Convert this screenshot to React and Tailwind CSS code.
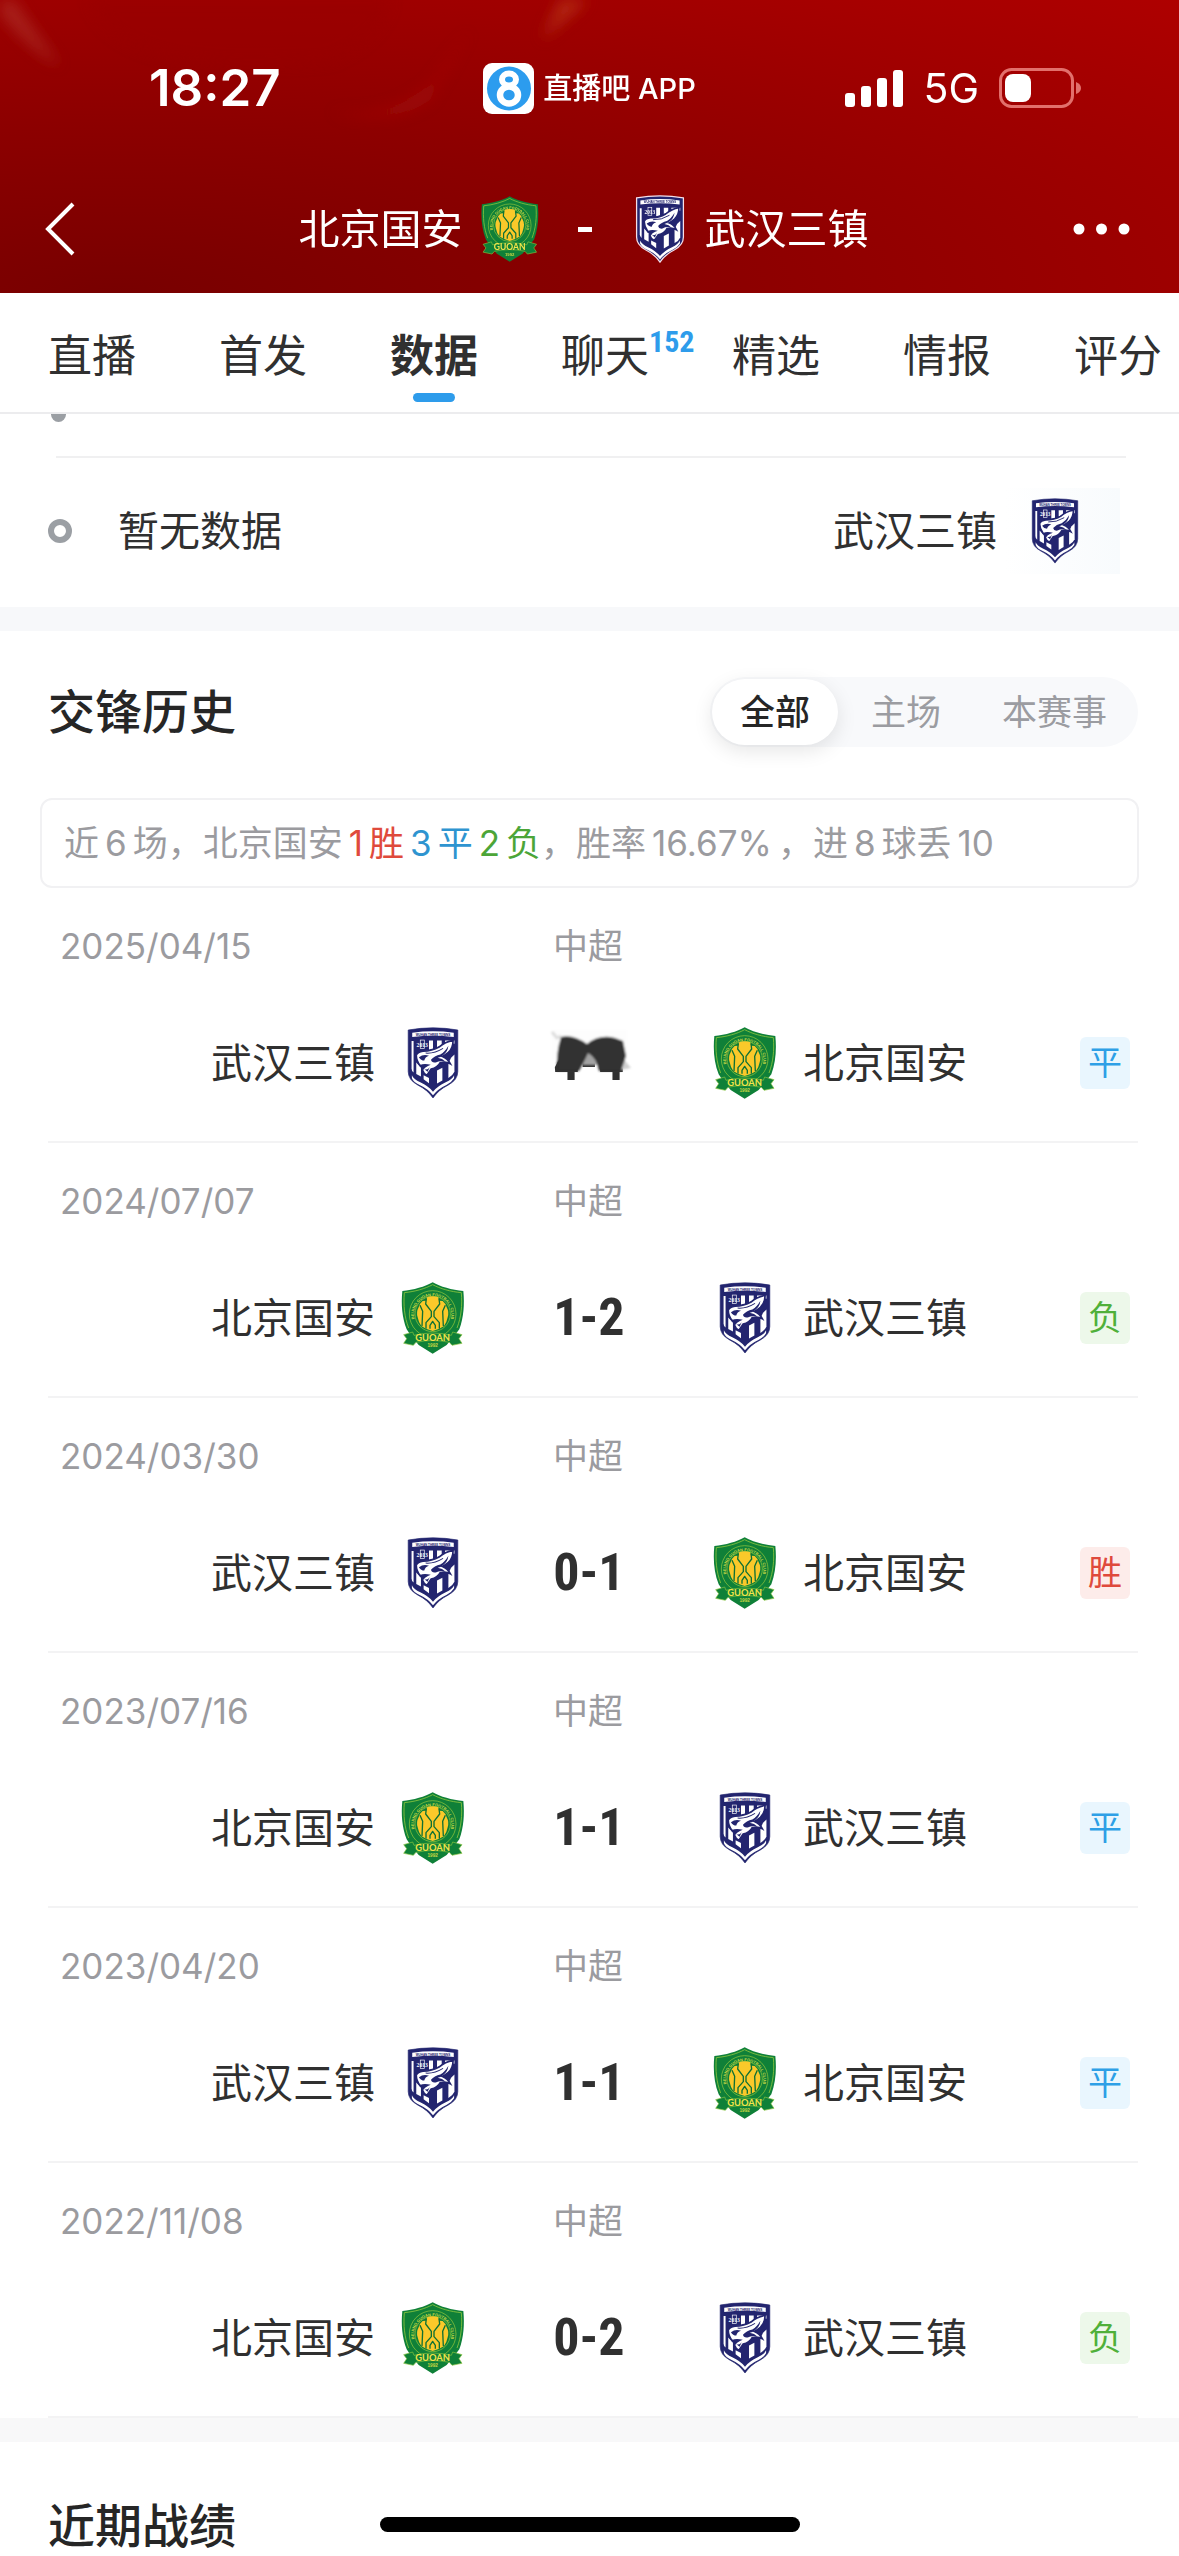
import { useId } from "react";

const GUOAN = "北京国安";
const WUHAN = "武汉三镇";

const tabs = [
  { label: "直播" },
  { label: "首发" },
  { label: "数据", active: true },
  { label: "聊天", count: "152" },
  { label: "精选" },
  { label: "情报" },
  { label: "评分" },
];

const matches = [
  { date: "2025/04/15", home: WUHAN, away: GUOAN, score: "4-4", result: "平", smudged: true },
  { date: "2024/07/07", home: GUOAN, away: WUHAN, score: "1-2", result: "负" },
  { date: "2024/03/30", home: WUHAN, away: GUOAN, score: "0-1", result: "胜" },
  { date: "2023/07/16", home: GUOAN, away: WUHAN, score: "1-1", result: "平" },
  { date: "2023/04/20", home: WUHAN, away: GUOAN, score: "1-1", result: "平" },
  { date: "2022/11/08", home: GUOAN, away: WUHAN, score: "0-2", result: "负" },
];

const resultStyle = {
  平: "bg-[#e9f6fe] text-[#2e9fe6]",
  负: "bg-[#edf8ea] text-[#4fb03a]",
  胜: "bg-[#fdecea] text-[#df4a3c]",
};

function GuoanCrest({ className }) {
  const ring = useId();
  return (
    <svg viewBox="28 18 190 216" className={className} aria-hidden="true">
      <path
        d="M122 19 C100 32 64 42 31 45 C27 85 30 125 44 160 L56 178 L80 207 L122 233 L164 207 L188 178 L202 160 C215 125 218 85 214 45 C180 42 144 32 122 19Z"
        fill="#0f8038"
      />
      <path
        d="M122 26 C100 38 68 47 37 50 C34 88 37 122 50 156 M122 26 C144 38 176 47 208 50 C211 88 208 122 195 156"
        fill="none"
        stroke="#8cc63f"
        strokeWidth="2.5"
      />
      <path id={ring} d="M76 148 A56 56 0 1 1 168 148" fill="none" />
      <circle cx="122" cy="114" r="70" fill="none" stroke="#9ccb3c" strokeWidth="2" />
      <text fontSize="12" fontWeight="700" fill="#c9d944" fontFamily="Liberation Sans, sans-serif">
        <textPath href={`#${ring}`} startOffset="50%" textAnchor="middle">
          BEIJING GUOAN FOOTBALL CLUB
        </textPath>
      </text>
      <circle cx="122" cy="114" r="53" fill="#0f8038" stroke="#9ccb3c" strokeWidth="2" />
      <path
        d="M106 63 Q122 58 138 63 L142 74 L152 75 Q161 82 164 94 Q172 108 167 124 Q164 140 156 150 L142 158 L122 165 L102 158 L88 150 Q80 140 77 124 Q72 108 80 94 Q83 82 92 75 L102 74Z"
        fill="#fbc92a"
      />
      <g fill="none" stroke="#0f7034" strokeWidth="4" strokeLinejoin="round">
        <path d="M103 68 L101 84 L118 106 L118 122 L102 140 V158" />
        <path d="M141 68 L143 84 L126 106 L126 122 L142 140 V158" />
        <path d="M84 88 L92 106 L90 150" />
        <path d="M160 88 L152 106 L154 150" />
        <path d="M114 158 V148 L122 136 L130 148 V158" />
      </g>
      <path
        d="M35 176 L62 168 L66 178 Q122 164 178 178 L182 168 L210 176 L201 188 L210 202 L180 208 L172 199 Q122 188 72 199 L64 208 L35 202 L44 188Z"
        fill="#0f8038"
        stroke="#8cc63f"
        strokeWidth="2"
      />
      <text x="122" y="194" textAnchor="middle" fontSize="28" fontWeight="700" fill="#f3e44a" fontFamily="Lato, sans-serif">
        GUOAN
      </text>
      <text x="122" y="213" textAnchor="middle" fontSize="14" fontWeight="700" fill="#c9d944" fontFamily="Liberation Sans, sans-serif">
        1992
      </text>
    </svg>
  );
}

function WuhanCrest({ className, outlined }) {
  return (
    <svg viewBox="85 78 154 215" className={className} aria-hidden="true">
      <path
        d="M88 87 Q162 74 236 87 V211 Q236 236 208 251 Q178 266 162 290 Q146 266 116 251 Q88 236 88 211Z"
        fill="#23256f"
        stroke={outlined ? "#f6dfe8" : "#23256f"}
        strokeWidth={outlined ? 4 : 2}
      />
      <path d="M100 95 Q162 87 224 95 V108 Q162 100 100 108Z" fill="#fff" />
      <text x="162" y="104" textAnchor="middle" fontSize="9" fontWeight="700" fill="#23256f" fontFamily="Liberation Sans, sans-serif">
        WUHAN THREE TOWNS
      </text>
      <g fill="#fff">
        <path d="M98 120 H104 V214 Q98 210 98 202Z" />
        <path d="M150 118 H162 V142 L150 145Z" />
        <path d="M174 118 H188 V132 L174 138Z" />
        <path d="M198 118 H226 V128 Q210 122 198 130Z" />
        <path d="M226 160 V212 Q222 222 208 230 V186 L216 170Z" />
        <path d="M112 184 L126 200 V226 L112 218Z" />
        <path d="M134 222 L150 230 V246 L134 234Z" />
        <path d="M174 208 L190 200 V238 L174 247Z" />
      </g>
      <rect x="124" y="117" width="12" height="25" fill="none" stroke="#fff" strokeWidth="2" />
      <text x="130" y="137" textAnchor="middle" fontSize="17" fontWeight="700" fill="#fff" fontFamily="Liberation Serif, serif">
        2013
      </text>
      <path
        d="M112 162 Q116 152 132 150 Q160 150 180 138 Q198 122 222 118 Q222 140 208 154 Q198 162 190 166 Q206 172 214 188 Q200 180 184 184 Q176 200 156 204 L144 222 Q134 218 130 206 Q136 196 146 192 Q134 190 124 194 Q112 178 112 162Z"
        fill="#fff"
        stroke="#23256f"
        strokeWidth="5"
      />
      <path d="M120 168 Q134 158 150 164 Q138 168 136 178 Q126 178 120 168Z" fill="#23256f" />
      <path d="M156 176 Q166 164 184 160 Q198 152 208 134 Q206 152 192 162 Q184 168 176 170 Q190 172 200 182 Q184 176 170 184 Q158 186 156 176Z" fill="#23256f" />
      <path d="M140 156 Q166 158 192 142" fill="none" stroke="#23256f" strokeWidth="3" />
      <path d="M136 204 Q146 208 152 198 L146 212Z" fill="#23256f" />
      <path d="M99 222 Q104 234 124 243 Q148 254 162 271 Q176 254 200 243 Q220 234 225 222 V231 Q218 243 202 251 Q176 263 162 282 Q148 263 122 251 Q104 243 99 231Z" fill="#fff" />
    </svg>
  );
}

function Crest({ team, className, outlined }) {
  return team === GUOAN ? (
    <GuoanCrest className={className} />
  ) : (
    <WuhanCrest className={className} outlined={outlined} />
  );
}

function StatusBar() {
  return (
    <div className="grid grid-cols-[1fr_auto_1fr] items-center pt-[60px]">
      <time className="pl-[149px] text-[51px] leading-[56px] font-semibold">18:27</time>
      <div className="flex items-center gap-[9px]">
        <svg viewBox="0 0 51 51" className="size-[51px]" aria-hidden="true">
          <rect width="51" height="51" rx="9" fill="#fff" />
          <circle cx="26" cy="25.500" r="22" fill="#2c9cee" />
          <ellipse cx="26" cy="16.500" rx="7" ry="6" fill="none" stroke="#fff" strokeWidth="6" />
          <ellipse cx="26" cy="32" rx="9" ry="8.500" fill="none" stroke="#fff" strokeWidth="6.500" />
        </svg>
        <span className="pt-[2px] text-[29px] leading-[40px] font-medium">直播吧 APP</span>
      </div>
      <div className="flex items-center justify-end gap-5 pr-[98px]">
        <svg viewBox="0 0 58 38" className="h-[38px] w-[58px]" fill="#fff" aria-hidden="true">
          <rect x="0" y="24" width="10" height="14" rx="3" />
          <rect x="16" y="17" width="10" height="21" rx="3" />
          <rect x="32" y="9" width="10" height="29" rx="3" />
          <rect x="48" y="1" width="10" height="37" rx="3" />
        </svg>
        <span className="text-[41px] leading-[48px]">5G</span>
        <svg viewBox="0 0 82 40" className="h-10 w-[82px]" aria-hidden="true">
          <rect x="1.500" y="1.500" width="72" height="37" rx="11" fill="none" stroke="#e2706c" strokeWidth="3" />
          <rect x="6" y="6" width="26" height="28" rx="8" fill="#fff" />
          <path d="M77 14 Q82 16 82 20 Q82 24 77 26Z" fill="#e2706c" />
        </svg>
      </div>
    </div>
  );
}

function NavBar() {
  return (
    <div className="grid grid-cols-[1fr_auto_1fr] items-center pt-[79px] pb-[30px]">
      <button type="button" aria-label="返回" className="justify-self-start pl-[44px]">
        <svg viewBox="0 0 32 56" className="h-14 w-8" fill="none" stroke="#fff" strokeWidth="4" aria-hidden="true">
          <path d="M29 3 L4 28 L29 53" />
        </svg>
      </button>
      <h1 className="flex items-center pr-3 text-[41px] leading-[60px]">
        <span>{GUOAN}</span>
        <Crest team={GUOAN} className="ml-[18px] h-[66px] w-[58px]" />
        <span className="mr-[43px] ml-[39px] h-[5px] w-[14px] bg-white" />
        <Crest team={WUHAN} outlined className="mr-[20px] h-[68px] w-[50px]" />
        <span>{WUHAN}</span>
      </h1>
      <button type="button" aria-label="更多" className="justify-self-end pr-[49px]">
        <svg viewBox="0 0 57 12" className="h-3 w-[57px]" fill="#fff" aria-hidden="true">
          <circle cx="6" cy="6" r="5.500" />
          <circle cx="28.500" cy="6" r="5.500" />
          <circle cx="51" cy="6" r="5.500" />
        </svg>
      </button>
    </div>
  );
}

function Tabs() {
  return (
    <nav className="flex h-[121px] items-start gap-[83px] overflow-hidden border-b-2 border-[#ececee] bg-white pt-[33px] pl-12 text-[44px] leading-[60px] text-[#303030]">
      {tabs.map((tab) => (
        <button
          key={tab.label}
          type="button"
          aria-current={tab.active ? "page" : undefined}
          className={
            tab.active
              ? "relative flex shrink-0 flex-col items-center gap-[7px] font-bold"
              : "relative flex shrink-0 flex-col items-center"
          }
        >
          <span>{tab.label}</span>
          {tab.active && <span className="h-[9px] w-[42px] rounded-full bg-[#2e9ceb]" />}
          {tab.count && (
            <span className="absolute top-0 left-full font-['Roboto_Condensed','Roboto',sans-serif] text-[30px] leading-[32px] font-bold text-[#2e9ceb]">
              {tab.count}
            </span>
          )}
        </button>
      ))}
    </nav>
  );
}

function FutureRow() {
  return (
    <section className="bg-white pb-[33px]">
      <div className="ml-[51px] h-2 w-[15px] rounded-b-full bg-[#9b9fa4]" />
      <div className="mr-[53px] ml-[56px] border-b-2 border-[#f0f0f1] pt-[34px]" />
      <div className="mt-[30px] mr-[59px] ml-12 flex h-[86px] items-center text-[41px] leading-[60px] text-[#303030]">
        <span className="size-6 rounded-full border-[6px] border-[#9b9fa4]" />
        <span className="ml-[46px]">暂无数据</span>
        <span className="ml-auto">{WUHAN}</span>
        <span className="ml-[8px] flex h-full w-[115px] items-center bg-linear-to-r from-white to-[#f8fbfd] pl-[26px]">
          <Crest team={WUHAN} className="h-[66px] w-[48px]" />
        </span>
      </div>
    </section>
  );
}

function Filter() {
  return (
    <div className="flex h-[70px] items-center rounded-full bg-[#f8f9fb] p-[2px] text-[35px] leading-[48px] text-[#9b9ca1]">
      <button
        type="button"
        aria-pressed="true"
        className="h-[66px] rounded-full bg-white px-[28px] font-medium text-[#262626] shadow-[0_6px_20px_rgba(0,0,0,0.10)]"
      >
        全部
      </button>
      <button type="button" className="px-[33px]">主场</button>
      <button type="button" className="pr-[29px] pl-[28px]">本赛事</button>
    </div>
  );
}

function Num({ children }) {
  return <span className="mx-[6px]">{children}</span>;
}

function Summary() {
  return (
    <p className="mx-[40px] mt-[51px] h-[90px] rounded-xl border-2 border-[#f1f1f3] pl-[22px] text-[35px] leading-[86px] whitespace-nowrap text-[#9b9b9f]">
      近<Num>6</Num>场，北京国安
      <span className="text-[#df4a3c]"><Num>1</Num>胜</span>
      <span className="text-[#2e94d0]"><Num>3</Num>平</span>
      <span className="text-[#4ca538]"><Num>2</Num>负</span>
      ，胜率<Num>16.67%</Num>，进<Num>8</Num>球丢<Num>10</Num>
    </p>
  );
}

function Smudge() {
  const blur = useId();
  return (
    <svg viewBox="-5 8 110 90" className="absolute top-1/2 left-1/2 h-[90px] w-[110px] -translate-x-1/2 -translate-y-1/2" aria-hidden="true">
      <filter id={blur}>
        <feGaussianBlur stdDeviation="1.200" />
      </filter>
      <g filter={`url(#${blur})`}>
        <path d="M12 20 H88 V50 H12Z" fill="#fdfdfd" />
        <path d="M42 40 L50 36 L60 42 L62 55 H40Z" fill="#a3a3a3" />
        <path d="M82 46 L92 58 L82 60Z" fill="#cfcfcf" />
        <path d="M13 22 L18 28 L22 26" fill="none" stroke="#ddd" strokeWidth="3" />
        <path d="M22 27 Q34 24 48 34 Q60 24 76 28 L84 31 L87 46 L82 61 H60 Q58 48 49 43 Q46 50 40 61 H18 Q17 42 22 27Z" fill="#303030" />
      </g>
    </svg>
  );
}

function MatchRow({ match }) {
  return (
    <li className="mr-[41px] ml-12 h-[255px] border-b-2 border-[#f3f3f4]">
      <div className="grid grid-cols-[1fr_auto_1fr] pt-[34px] pr-[10px] text-[35px] leading-[48px] text-[#9b9b9f]">
        <time className="pl-3">{match.date}</time>
        <span>中超</span>
      </div>
      <div className="mt-[57px] grid grid-cols-[1fr_248px_1fr] items-center pr-[8px] text-[41px] leading-[72px] text-[#303030]">
        <div className="flex items-center justify-end gap-[26px]">
          <span>{match.home}</span>
          <Crest team={match.home} className="h-[72px] w-16" />
        </div>
        <div className="relative text-center font-['Roboto_Condensed','Roboto',sans-serif] text-[52px] font-bold">
          <span>{match.score}</span>
          {match.smudged && <Smudge />}
        </div>
        <div className="flex items-center gap-[26px]">
          <Crest team={match.away} className="h-[72px] w-16" />
          <span>{match.away}</span>
          <span className={`ml-auto rounded-md px-2 text-[34px] leading-[52px] ${resultStyle[match.result]}`}>
            {match.result}
          </span>
        </div>
      </div>
    </li>
  );
}

export default function App() {
  return (
    <div className="h-screen overflow-hidden bg-white font-['Inter','Noto_Sans_CJK_SC',sans-serif]">
      <header className="relative overflow-hidden bg-[radial-gradient(ellipse_at_10%_100%,#780000_0%,#8c0000_40%,#a00000_75%,#ae0000_100%)] text-white">
        <svg viewBox="0 0 1179 293" preserveAspectRatio="none" className="absolute inset-0 size-full" aria-hidden="true">
          <defs>
            <filter id="soft-streak">
              <feGaussianBlur stdDeviation="7" />
            </filter>
          </defs>
          <g filter="url(#soft-streak)">
            <path d="M0 0 H14 Q34 30 60 66 Q30 50 0 14Z" fill="#b5483a" opacity="0.450" />
            <path d="M560 0 H588 L542 40Z" fill="#c0401c" opacity="0.600" />
            <path d="M330 112 Q390 118 430 84 L470 30 L430 100 Q390 128 330 112Z" fill="#b01c14" opacity="0.400" />
            <path d="M90 0 Q120 80 330 60 Q380 40 390 0Z" fill="#980000" opacity="0.500" />
          </g>
        </svg>
        <div className="relative">
          <StatusBar />
          <NavBar />
        </div>
      </header>
      <Tabs />
      <FutureRow />
      <section className="border-t-[24px] border-[#f7f8fa] pt-[46px]">
        <div className="flex items-center justify-between pr-[41px] pl-12">
          <h2 className="text-[47px] leading-[64px] font-medium text-[#262626]">交锋历史</h2>
          <Filter />
        </div>
        <Summary />
        <ul>
          {matches.map((match) => (
            <MatchRow key={match.date} match={match} />
          ))}
        </ul>
      </section>
      <section className="border-t-[24px] border-[#f8f8f9] pt-[52px] pl-12">
        <h2 className="text-[47px] leading-[64px] font-medium text-[#262626]">近期战绩</h2>
      </section>
      <div className="fixed bottom-6 left-1/2 h-[15px] w-[420px] -translate-x-1/2 rounded-full bg-black" />
    </div>
  );
}
